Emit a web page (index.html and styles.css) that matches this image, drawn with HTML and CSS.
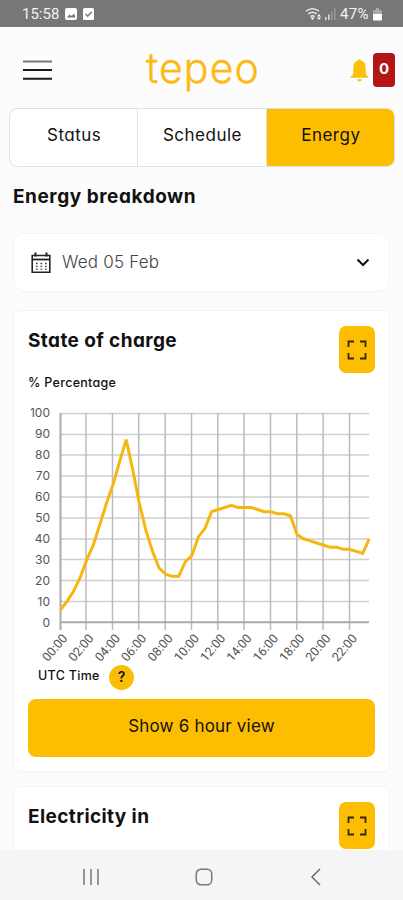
FILE: index.html
```html
<!DOCTYPE html>
<html lang="en">
<head>
<meta charset="UTF-8">
<meta name="viewport" content="width=device-width, initial-scale=1.0">
<title>tepeo</title>
<link rel="stylesheet" href="styles.css">
</head>
<body>
    <div class="statusbar">
        <span class="clock">15:58</span>
        <svg width="30" height="13" viewBox="0 0 30 13">
            <rect x="0" y="0" width="12" height="12" rx="2" fill="#fff"/>
            <path d="M2 9.5l2.5-3 2 1.6 2.7-2.6 1.3 4z" fill="#777"/>
            <rect x="18" y="0" width="11" height="12" rx="1.5" fill="#fff"/>
            <path d="M20.5 6l2.2 2.2 4-4.4" fill="none" stroke="#777" stroke-width="1.5"/>
        </svg>
        <svg class="signal" width="31" height="14" viewBox="0 0 31 14">
            <g fill="none" stroke="#e6e6e6" stroke-width="1.5">
                <path d="M1 4.2q6.500-5 13 0M3.200 7q4.300-3.400 8.600 0M5.400 9.600q2.100-1.600 4.200 0"/>
            </g>
            <path d="M7.500 13L5.500 10.500h4zM14 7l2 2.500h-4zM14 13l2-2.500h-4z" fill="#fff"/>
            <path d="M20 10h1.500v3H20zM23 7.500h1.500V13H23z" fill="#ddd"/>
            <path d="M26 4.500h1.500V13H26zM29 1h1.500v12H29z" fill="#999"/>
        </svg>
        <span class="percent">47%</span>
        <svg width="9" height="13" viewBox="0 0 9 13">
            <path d="M3 0h3v2h1.500q1.500 0 1.500 1.500V6H0V3.500Q0 2 1.500 2H3z" fill="#aaa"/>
            <path d="M0 6h9v5.500q0 1-1 1H1q-1 0-1-1z" fill="#fff"/>
        </svg>
    </div>

    <div class="page">
        <div class="header">
            <svg class="menu" width="29" height="22" viewBox="0 0 29 22">
                <path d="M0 2.500h29" stroke="#777" stroke-width="2"/>
                <path d="M0 11h29M0 19.700h29" stroke="#1c1a1e" stroke-width="2"/>
            </svg>
            <div class="logo">tepeo</div>
            <div class="alerts">
                <svg width="19" height="23" viewBox="0 0 19 23">
                    <path d="M9.500 0q1.200 0 1.200 1.500c3.300.6 5 3.200 5 6.500v5.500c0 2 .8 3.200 2.800 4v1.300H.5v-1.300c2-.8 2.800-2 2.800-4V8c0-3.300 1.700-5.900 5-6.500Q8.300 0 9.500 0zM7 20.300h5q-.4 2.200-2.500 2.200T7 20.300z" fill="#fcbf0c"/>
                </svg>
                <span class="count">0</span>
            </div>
        </div>

        <div class="tabs">
            <div class="tab">Status</div>
            <div class="tab">Schedule</div>
            <div class="tab active">Energy</div>
        </div>

        <h2 class="title">Energy breakdown</h2>

        <div class="date">
            <svg width="20" height="22" viewBox="0 0 20 22">
                <path d="M1.200 3.500h17.600v16.800H1.200z" fill="none" stroke="#222" stroke-width="1.600"/>
                <path d="M1 7.500h18" stroke="#222" stroke-width="1.800"/>
                <path d="M4.500 0.500v4M15.500 0.500v4" stroke="#222" stroke-width="2"/>
                <path d="M5 11.500h11M5 14.300h11M5 17.200h11" stroke="#444" stroke-width="1.300" stroke-dasharray="1.700 2.800"/>
            </svg>
            <span class="day">Wed 05 Feb</span>
            <svg class="chevron" width="14" height="9" viewBox="0 0 14 9">
                <path d="M1.500 1.500L7 7l5.500-5.500" fill="none" stroke="#111" stroke-width="2"/>
            </svg>
        </div>

        <div class="card">
            <div class="card-head">
                <h3>State of charge</h3>
                <div class="expand">
                    <svg width="20" height="20" viewBox="0 0 20 20">
                        <path d="M1.500 7V1.500H7M13 1.500h5.500V7M18.500 13v5.500H13M7 18.500H1.500V13" fill="none" stroke="#30290c" stroke-width="1.800"/>
                    </svg>
                </div>
            </div>
            <div class="unit">% Percentage</div>

            <svg class="chart" width="348" height="265" viewBox="28 400 348 265">
                <path class="grid" d="M60 413.500H369M60 434.500H369M60 455H369M60 476H369M60 497H369M60 518H369M60 539H369M60 559.500H369M60 580.500H369M60 601.500H369"/>
                <path class="grid-v" d="M86 413V630M112.500 413V630M138.700 413V630M165.200 413V630M191.500 413V630M217.800 413V630M244 413V630M270.500 413V630M296.800 413V630M323.100 413V630M349.500 413V630"/>
                <path class="axis" d="M60.500 413V630M60 622.300H369"/>
                <g class="ylabels">
                    <text x="50" y="417">100</text>
                    <text x="50" y="438">90</text>
                    <text x="50" y="459">80</text>
                    <text x="50" y="480">70</text>
                    <text x="50" y="501">60</text>
                    <text x="50" y="522">50</text>
                    <text x="50" y="543">40</text>
                    <text x="50" y="563.500">30</text>
                    <text x="50" y="584.500">20</text>
                    <text x="50" y="605.500">10</text>
                    <text x="50" y="626.500">0</text>
                </g>
                <g class="xlabels">
                    <text transform="translate(68 638.500) rotate(-50)">00:00</text>
                    <text transform="translate(94.300 638.500) rotate(-50)">02:00</text>
                    <text transform="translate(120.700 638.500) rotate(-50)">04:00</text>
                    <text transform="translate(147 638.500) rotate(-50)">06:00</text>
                    <text transform="translate(173.400 638.500) rotate(-50)">08:00</text>
                    <text transform="translate(199.700 638.500) rotate(-50)">10:00</text>
                    <text transform="translate(226 638.500) rotate(-50)">12:00</text>
                    <text transform="translate(252.300 638.500) rotate(-50)">14:00</text>
                    <text transform="translate(278.700 638.500) rotate(-50)">16:00</text>
                    <text transform="translate(305 638.500) rotate(-50)">18:00</text>
                    <text transform="translate(331.300 638.500) rotate(-50)">20:00</text>
                    <text transform="translate(357.700 638.500) rotate(-50)">22:00</text>
                </g>
                <!-- half-hourly readings -->
                <polyline id="line" class="line"/>
            </svg>

            <div class="axis-name">
                <span class="utc">UTC Time</span>
                <span class="help">?</span>
            </div>
            <div class="button">Show 6 hour view</div>
        </div>

        <div class="card second">
            <div class="card-head">
                <h3>Electricity in</h3>
                <div class="expand">
                    <svg width="20" height="20" viewBox="0 0 20 20">
                        <path d="M1.500 7V1.500H7M13 1.500h5.500V7M18.500 13v5.500H13M7 18.500H1.500V13" fill="none" stroke="#30290c" stroke-width="1.800"/>
                    </svg>
                </div>
            </div>
        </div>
    </div>

    <div class="navbar">
        <svg width="18" height="18" viewBox="0 0 18 18">
            <path d="M2 1v16M9 1v16M16 1v16" stroke="#858587" stroke-width="1.700"/>
        </svg>
        <svg width="18" height="18" viewBox="0 0 18 18">
            <rect x="1.300" y="1.300" width="15.400" height="15.400" rx="4.500" fill="none" stroke="#77777a" stroke-width="1.500"/>
        </svg>
        <svg width="18" height="18" viewBox="0 0 18 18">
            <path d="M13 1L5 9l8 8" fill="none" stroke="#6a6a6d" stroke-width="1.500"/>
        </svg>
    </div>

<script>
    const charge = [
        6, 10, 15, 21.5, 30, 37, 47, 57, 66, 77, 87.5, 73,
        57, 44, 34, 26, 23, 22, 22, 29, 32, 41, 45, 53,
        54, 55, 56, 55, 55, 55, 54, 53, 53, 52, 52, 51,
        42, 40, 39, 38, 37, 36, 36, 35, 35, 34, 33, 40
    ];
    const points = charge.map((v, i) => (60.5 + i * 6.57) + ',' + (622.3 - v * 2.088));
    document.getElementById('line').setAttribute('points', points.join(' '));
</script>
</body>
</html>
```
FILE: styles.css
```css
* {
    box-sizing: border-box;
}

body {
    margin: 0;
    height: 900px;
    display: flex;
    flex-direction: column;
    overflow: hidden;
    background: #fcfcfc;
    color: #111;
    font-family: Inter, "Liberation Sans", sans-serif;
    /* round single-storey a */
    font-feature-settings: "cv11";
}

svg {
    display: block;
    flex-shrink: 0;
}

h2, h3 {
    margin: 0;
    font-size: 19px;
    line-height: 24px;
    font-weight: 700;
    white-space: nowrap;
}

h3 {
    letter-spacing: 0.4px;
}

.statusbar {
    height: 27px;
    flex-shrink: 0;
    display: flex;
    align-items: center;
    padding: 1px 21px 0 22px;
    background: #777;
    color: #f2f2f2;
    font-family: Roboto, sans-serif;
    font-size: 15px;
}

.clock {
    width: 43px;
}

.signal {
    margin-left: auto;
}

.percent {
    width: 32px;
    margin: 0 1px 0 4px;
    letter-spacing: 0.3px;
}

.page {
    height: 823px;
    flex-shrink: 0;
    overflow: hidden;
}

.header {
    height: 81px;
    display: flex;
    align-items: center;
    padding: 5px 8px 0 23px;
}

.logo {
    width: 118px;
    margin-left: 94px;
    margin-top: -5px;
    font-size: 41px;
    line-height: 48px;
    font-weight: 300;
    letter-spacing: 1.1px;
    color: #fcb912;
    -webkit-text-stroke: 0.4px #fcb912;
}

.alerts {
    margin-left: auto;
    display: flex;
    align-items: center;
    gap: 4px;
}

.count {
    width: 22px;
    height: 34px;
    border-radius: 4px;
    background: #b41616;
    color: #fff;
    font-size: 15px;
    line-height: 31px;
    font-weight: 700;
    text-align: center;
}

.tabs {
    display: flex;
    height: 59px;
    margin: 0 8px 0 9px;
    border: 1px solid #dfe2e2;
    border-radius: 8px;
    background: #fff;
    overflow: hidden;
}

.tab {
    flex: 1;
    padding-top: 15px;
    padding-left: 1px;
    font-size: 17px;
    line-height: 22px;
    text-align: center;
    font-weight: 400;
    letter-spacing: 0.5px;
}

.tab + .tab {
    border-left: 1px solid #dfe2e2;
}

.tab.active {
    background: #fdbe02;
}

.title {
    margin: 18px 0 0 13px;
    letter-spacing: 0.55px;
}

.date {
    height: 59px;
    margin: 24px 13px 0;
    padding: 0 19px 0 17px;
    display: flex;
    align-items: center;
    border: 1px solid #f3f3f3;
    border-radius: 12px;
    background: #fff;
}

.day {
    margin-left: 11px;
    margin-top: -2px;
    font-size: 17px;
    font-weight: 300;
    letter-spacing: 0.2px;
    color: #444;
}

.chevron {
    margin-left: auto;
}

.card {
    height: 462px;
    margin: 18px 13px 0;
    padding: 15px 14px 0;
    border: 1px solid #f3f3f3;
    border-radius: 6px;
    background: #fff;
}

.card.second {
    margin-top: 14px;
}

.card-head {
    display: flex;
    justify-content: space-between;
}

.card-head h3 {
    margin-top: 3px;
}

.expand {
    width: 36px;
    height: 47px;
    display: flex;
    align-items: center;
    justify-content: center;
    border-radius: 7px;
    background: #fdbe02;
}

.unit {
    margin-top: 2px;
    font-size: 12.5px;
    line-height: 16px;
    font-weight: 500;
    letter-spacing: 0.3px;
}

.chart {
    margin-top: 9px;
}

.grid, .grid-v, .axis {
    fill: none;
    stroke: #cfcfcf;
    stroke-width: 1.5;
}

.grid-v {
    stroke: #bcbcbc;
}

.axis {
    stroke: #aaa;
    stroke-width: 2;
}

.ylabels, .xlabels {
    font-family: Inter, sans-serif;
    font-size: 12px;
    fill: #555;
    text-anchor: end;
}

.xlabels {
    font-family: Roboto, sans-serif;
    font-size: 12.5px;
}

.line {
    fill: none;
    stroke: #f5b70f;
    stroke-width: 3;
}

.axis-name {
    height: 25px;
    display: flex;
    align-items: center;
    padding-left: 10px;
}

.utc {
    width: 71px;
    margin-top: -4px;
    font-size: 12.5px;
    font-weight: 500;
    letter-spacing: 0.3px;
}

.help {
    width: 25px;
    height: 25px;
    border-radius: 50%;
    background: #fcbd06;
    font-size: 14px;
    line-height: 23px;
    font-weight: 600;
    text-align: center;
}

.button {
    height: 58px;
    margin-top: 9px;
    padding-top: 16px;
    border-radius: 8px;
    background: #fdbe02;
    font-size: 17px;
    line-height: 22px;
    font-weight: 400;
    letter-spacing: 0.2px;
    text-align: center;
}

.navbar {
    flex: 1;
    display: flex;
    align-items: center;
    padding: 4px 78px 0 82px;
    justify-content: space-between;
    background: #f5f5f7;
}
```
